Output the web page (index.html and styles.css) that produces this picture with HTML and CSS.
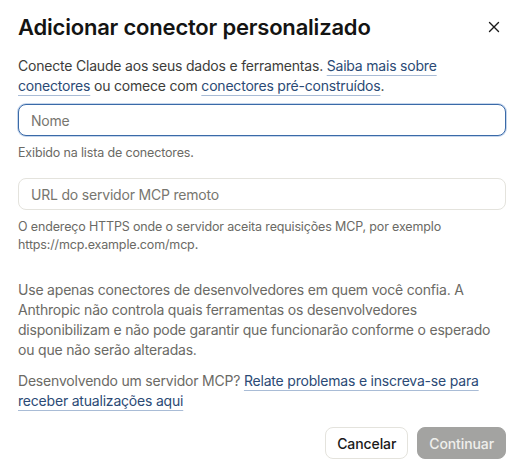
FILE: index.html
```html
<!DOCTYPE html>
<html lang="pt-BR">
<head>
    <meta charset="UTF-8">
    <meta name="viewport" content="width=device-width, initial-scale=1.0">
    <title>Adicionar conector personalizado</title>
    <link rel="stylesheet" href="styles.css">
</head>
<body>
    <div class="dialog">
        <div class="dialog-header">
            <h1>Adicionar conector personalizado</h1>
            <button class="close-btn" aria-label="Fechar">
                <svg width="14" height="14" viewBox="0 0 14 14" fill="none" stroke="#1a1a1a" stroke-width="1.4" stroke-linecap="round">
                    <path d="M2.5 2.5 L11.5 11.5 M11.5 2.5 L2.5 11.5"/>
                </svg>
            </button>
        </div>

        <p class="intro">
            Conecte Claude aos seus dados e ferramentas. <a href="#">Saiba mais sobre conectores</a> ou comece com <a href="#">conectores pré-construídos</a>.
        </p>

        <div class="field">
            <input type="text" class="text-input focused" placeholder="Nome">
            <div class="hint">Exibido na lista de conectores.</div>
        </div>

        <div class="field">
            <input type="text" class="text-input" placeholder="URL do servidor MCP remoto">
            <div class="hint">O endereço HTTPS onde o servidor aceita requisições MCP, por exemplo https://mcp.example.com/mcp.</div>
        </div>

        <p class="notice">
            Use apenas conectores de desenvolvedores em quem você confia. A Anthropic não controla quais ferramentas os desenvolvedores disponibilizam e não pode garantir que funcionarão conforme o esperado ou que não serão alteradas.
        </p>

        <p class="notice dev">
            Desenvolvendo um servidor MCP? <a href="#">Relate problemas e inscreva-se para receber atualizações aqui</a>
        </p>

        <div class="actions">
            <button class="btn btn-secondary">Cancelar</button>
            <button class="btn btn-primary" disabled>Continuar</button>
        </div>
    </div>
</body>
</html>
```

FILE: styles.css
```css
body {
    margin: 0;
    background-color: #ffffff;
    font-family: Inter, "Open Sans", sans-serif;
    color: #1a1a1a;
}
.dialog {
    padding: 12px 19px 0 18px;
}
.dialog-header {
    display: flex;
    align-items: center;
    justify-content: space-between;
}
h1 {
    margin: 0;
    font-size: 22px;
    font-weight: 600;
    letter-spacing: -0.2px;
    line-height: 30px;
    color: #141413;
}
.close-btn {
    background: none;
    border: none;
    padding: 0;
    margin-right: 2px;
    width: 20px;
    height: 20px;
    display: flex;
    align-items: center;
    justify-content: center;
    cursor: pointer;
}
.intro {
    margin: 14px 0 0;
    font-size: 14px;
    letter-spacing: -0.2px;
    line-height: 20px;
    color: #3d3d3a;
}
a {
    color: #2b4a75;
    text-decoration: underline;
    text-decoration-color: #a9bcd6;
    text-decoration-thickness: 1px;
    text-underline-offset: 4px;
}
.field {
    margin-top: 8px;
}
.field + .field {
    margin-top: 16px;
}
.text-input {
    box-sizing: border-box;
    width: 100%;
    height: 32px;
    padding: 0 12px;
    border: 1px solid #e4e3dd;
    border-radius: 8px;
    font-family: inherit;
    font-size: 14px;
    letter-spacing: -0.2px;
    color: #1a1a1a;
    background: #fff;
    outline: none;
}
.text-input::placeholder {
    color: #77766f;
}
.text-input.focused {
    border-color: #3a6aa8;
    box-shadow: 0 0 0 1px #c6d6ec;
}
.hint {
    margin-top: 8px;
    font-size: 12.5px;
    letter-spacing: -0.15px;
    line-height: 18px;
    color: #6b6a65;
}
.notice {
    margin: 26px 0 0;
    font-size: 14px;
    letter-spacing: -0.2px;
    line-height: 20px;
    color: #6b6a65;
}
.notice.dev {
    margin-top: 11px;
}
.actions {
    display: flex;
    justify-content: flex-end;
    gap: 9px;
    margin-top: 16px;
}
.btn {
    height: 32px;
    padding: 0 11px;
    border-radius: 8px;
    font-family: inherit;
    font-size: 14px;
    letter-spacing: -0.1px;
    font-weight: 450;
    cursor: pointer;
}
.btn-secondary {
    background: #fff;
    border: 1px solid #e4e3dd;
    color: #1a1a1a;
}
.btn-primary {
    background: #a3a3a1;
    border: 1px solid #a3a3a1;
    color: #efefec;
    cursor: default;
}
```
